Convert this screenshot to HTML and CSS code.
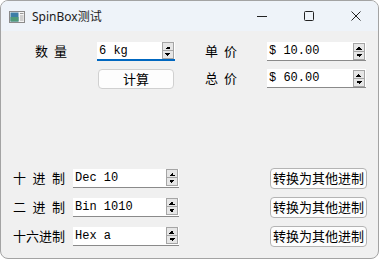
FILE: index.html
```html
<!DOCTYPE html>
<html lang="zh-CN">
<head>
    <meta charset="UTF-8">
    <title>SpinBox测试</title>
    <link rel="stylesheet" href="styles.css">
</head>
<body>
    <div class="window">
        <div class="titlebar">
            <svg class="app-icon" width="16" height="12" viewBox="0 0 16 12">
                <rect x="0.5" y="0.5" width="15" height="11" fill="#f4f4f4" stroke="#8a8a8a"/>
                <rect x="1.5" y="1.5" width="8" height="9" fill="#3c7ea6"/>
                <rect x="1.5" y="6" width="8" height="4.5" fill="#4f9a78"/>
                <rect x="11" y="2" width="3.5" height="1" fill="#9a9a9a"/>
                <rect x="11" y="4" width="3.5" height="6" fill="#cfcfcf"/>
            </svg>
            <span class="title">SpinBox测试</span>
            <div class="controls">
                <svg width="12" height="12" viewBox="0 0 12 12"><path d="M1 6.5h10" stroke="#222" stroke-width="1"/></svg>
                <svg width="12" height="12" viewBox="0 0 12 12"><rect x="1.5" y="1.5" width="9" height="9" rx="1" fill="none" stroke="#222"/></svg>
                <svg width="12" height="12" viewBox="0 0 12 12"><path d="M1.5 1.5l9 9M10.5 1.5l-9 9" stroke="#222" stroke-width="1"/></svg>
            </div>
        </div>

        <div class="content">
            <div class="price-grid">
                <span class="label">数 量</span>
                <div class="spinbox focused"><span>6 kg</span><i class="spin"></i></div>
                <span class="label">单 价</span>
                <div class="spinbox"><span>$ 10.00</span><i class="spin"></i></div>

                <span></span>
                <button class="btn calc">计算</button>
                <span class="label">总 价</span>
                <div class="spinbox"><span>$ 60.00</span><i class="spin"></i></div>
            </div>

            <div class="radix-list">
                <div class="radix-row">
                    <span class="label wide">十 进 制</span>
                    <div class="spinbox"><span>Dec 10</span><i class="spin"></i></div>
                    <button class="btn convert">转换为其他进制</button>
                </div>
                <div class="radix-row">
                    <span class="label wide">二 进 制</span>
                    <div class="spinbox"><span>Bin 1010</span><i class="spin"></i></div>
                    <button class="btn convert">转换为其他进制</button>
                </div>
                <div class="radix-row">
                    <span class="label wide">十六进制</span>
                    <div class="spinbox"><span>Hex a</span><i class="spin"></i></div>
                    <button class="btn convert">转换为其他进制</button>
                </div>
            </div>
        </div>
    </div>
</body>
</html>
```

FILE: styles.css
```css
body {
    margin: 0;
    background-color: #ffffff;
    font-family: "Noto Sans CJK SC", "Noto Sans", sans-serif;
}
.window {
    width: 377px;
    height: 257px;
    border: 1px solid #a3a3a3;
    border-radius: 8px;
    overflow: hidden;
    background-color: #f0f0f0;
    display: flex;
    flex-direction: column;
}
.titlebar {
    height: 30px;
    background-color: #eef3f9;
    display: flex;
    align-items: center;
    padding-left: 8px;
    flex-shrink: 0;
}
.app-icon {
    margin-top: 1px;
}
.title {
    margin-left: 7px;
    font-family: "Noto Sans", "Noto Sans CJK SC", sans-serif;
    font-size: 12px;
    color: #1a1a1a;
}
.controls {
    margin-left: auto;
    display: flex;
    gap: 35px;
    padding-right: 16px;
}
.content {
    padding: 11px 11px 0 12px;
}
.price-grid {
    display: grid;
    grid-template-columns: 32px 78px 32px 99px;
    grid-template-rows: 18px 20px;
    column-gap: 30px;
    row-gap: 9px;
    margin-left: 22px;
}
.label {
    font-size: 13px;
    line-height: 18px;
    color: #000;
    white-space: nowrap;
    text-align: justify;
    text-align-last: justify;
}
.label.wide {
    width: 52px;
    flex-shrink: 0;
}
.spinbox {
    display: flex;
    align-items: center;
    background-color: #ffffff;
    border-bottom: 1px solid #8a8a8a;
    padding-left: 2px;
    font-family: "Liberation Mono", monospace;
    font-size: 12px;
    color: #000;
    height: 18px;
}
.spinbox.focused {
    border-bottom: 2px solid #0067c0;
    height: 17px;
}
.spin {
    margin-left: auto;
    margin-right: 1px;
    width: 10px;
    height: 15px;
    border: 1px solid #a5a5a5;
    background-color: #e6e6e6;
    background-image:
        linear-gradient(#a5a5a5, #a5a5a5),
        linear-gradient(to bottom right, transparent 50%, #000 50%),
        linear-gradient(to bottom left, transparent 50%, #000 50%),
        linear-gradient(to top right, transparent 50%, #000 50%),
        linear-gradient(to top left, transparent 50%, #000 50%);
    background-size: 10px 1px, 3px 3px, 3px 3px, 3px 3px, 3px 3px;
    background-position: 0 7px, 2px 3px, 5px 3px, 2px 10px, 5px 10px;
    background-repeat: no-repeat;
    box-sizing: content-box;
}
.btn {
    font-family: "Noto Sans CJK SC", sans-serif;
    font-size: 13px;
    color: #000;
    background-color: #fdfdfd;
    border: 1px solid #d0d0d0;
    border-radius: 4px;
    padding: 0;
    line-height: 18px;
}
.calc {
    width: 76px;
    margin-left: 1px;
}
.radix-list {
    margin-top: 79px;
    display: flex;
    flex-direction: column;
    gap: 9px;
}
.radix-row {
    display: flex;
    align-items: center;
    height: 20px;
}
.radix-row .spinbox {
    width: 104px;
    margin-left: 8px;
}
.convert {
    margin-left: auto;
    width: 97px;
    height: 21px;
    border-color: #b4b4b4;
}
```
